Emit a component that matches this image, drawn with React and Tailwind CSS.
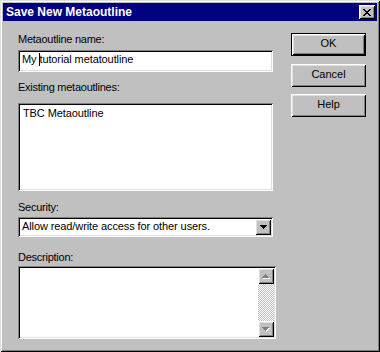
import React from "react";

// Win95-style bevels
const raised =
  "shadow-[inset_1px_1px_#ffffff,inset_-1px_-1px_#000000,inset_2px_2px_#dfdfdf,inset_-2px_-2px_#808080]";
const sunken =
  "shadow-[inset_1px_1px_#808080,inset_-1px_-1px_#ffffff,inset_2px_2px_#000000,inset_-2px_-2px_#dfdfdf]";

const TRI_DOWN = "M0 0h7v1H0zM1 1h5v1H1zM2 2h3v1H2zM3 3h1v1H3z";
const TRI_UP = "M3 0h1v1H3zM2 1h3v1H2zM1 2h5v1H1zM0 3h7v1H0z";
const CLOSE_X =
  "M0 0h2v1H0zM6 0h2v1H6zM1 1h2v1H1zM5 1h2v1H5zM2 2h4v1H2zM3 3h2v1H3zM2 4h4v1H2zM1 5h2v1H1zM5 5h2v1H5zM0 6h2v1H0zM6 6h2v1H6z";

const DisabledArrow = ({ d }) => (
  <svg width="8" height="5" shapeRendering="crispEdges">
    <path d={d} fill="#ffffff" transform="translate(1 1)" />
    <path d={d} fill="#808080" />
  </svg>
);

const Label = ({ children, className = "" }) => (
  <div className={`text-[11px] leading-[13px] tracking-[-0.25px] text-black ${className}`}>
    {children}
  </div>
);

const Button = ({ children, isDefault, className = "" }) => (
  <div
    className={`h-[23px] w-[75px] bg-[#c0c0c0] ${isDefault ? "border border-black" : ""} ${className}`}
  >
    <div
      className={`w-full h-full flex items-center justify-center pb-[2px] text-[11px] leading-[13px] ${raised}`}
    >
      {children}
    </div>
  </div>
);

const App = () => {
  return (
    <div className="w-[380px] h-[352px] bg-[#c0c0c0] p-[3px] flex flex-col font-['Liberation_Sans',Arial,sans-serif] shadow-[inset_1px_1px_#dfdfdf,inset_-1px_-1px_#000000,inset_2px_2px_#ffffff,inset_-2px_-2px_#808080]">
      {/* title bar */}
      <div className="h-[18px] bg-[#000080] flex items-center pl-[3px] pr-[2px]">
        <span className="text-white font-bold text-[12px] leading-[14px]">Save New Metaoutline</span>
        <div className="flex-1" />
        <div className={`w-[16px] h-[14px] bg-[#c0c0c0] flex items-center justify-center ${raised}`}>
          <svg width="8" height="7" shapeRendering="crispEdges">
            <path d={CLOSE_X} fill="#000000" />
          </svg>
        </div>
      </div>

      {/* body */}
      <div className="flex pl-[15px] pt-[12px]">
        <div className="w-[258px] flex flex-col">
          <Label>Metaoutline name:</Label>
          <div className={`mt-[4px] h-[22px] w-[255px] bg-white p-[2px] ${sunken}`}>
            <div className="pl-[2px] pt-px text-[11px] leading-[13px] tracking-[-0.1px] text-black whitespace-nowrap">
              My <span className="inline-block w-px h-[13px] bg-black align-top -mr-px" />tutorial metatoutline
            </div>
          </div>

          <Label className="mt-[9px]">Existing metaoutlines:</Label>
          <div className={`mt-[9px] h-[88px] w-[255px] bg-white p-[2px] ${sunken}`}>
            <div className="pl-[3px] pt-[2px] text-[11px] leading-[13px] tracking-[-0.1px] text-black">
              TBC Metaoutline
            </div>
          </div>

          <Label className="mt-[10px]">Security:</Label>
          <div className={`mt-[3px] h-[20px] w-[255px] bg-white p-[2px] flex ${sunken}`}>
            <div className="flex-1 pl-[2px] pt-px text-[11px] leading-[13px] tracking-[-0.1px] text-black whitespace-nowrap overflow-hidden">
              Allow read/write access for other users.
            </div>
            <div className={`w-[16px] h-[16px] bg-[#c0c0c0] flex items-center justify-center ${raised}`}>
              <svg width="7" height="4" shapeRendering="crispEdges">
                <path d={TRI_DOWN} fill="#000000" />
              </svg>
            </div>
          </div>

          <Label className="mt-[14px]">Description:</Label>
          <div className={`mt-[2px] h-[73px] w-[258px] bg-white p-[2px] flex ${sunken}`}>
            <div className="flex-1" />
            <div className="w-[16px] flex flex-col">
              <div className={`h-[16px] bg-[#c0c0c0] flex items-center justify-center ${raised}`}>
                <DisabledArrow d={TRI_UP} />
              </div>
              <div className="flex-1 bg-[repeating-conic-gradient(#c0c0c0_0%_25%,#ffffff_0%_50%)] bg-[length:2px_2px]" />
              <div className={`h-[16px] bg-[#c0c0c0] flex items-center justify-center ${raised}`}>
                <DisabledArrow d={TRI_DOWN} />
              </div>
            </div>
          </div>
        </div>

        <div className="ml-[15px] flex flex-col">
          <Button isDefault>OK</Button>
          <Button className="mt-[8px]">Cancel</Button>
          <Button className="mt-[7px]">Help</Button>
        </div>
      </div>
    </div>
  );
};

export default App;
